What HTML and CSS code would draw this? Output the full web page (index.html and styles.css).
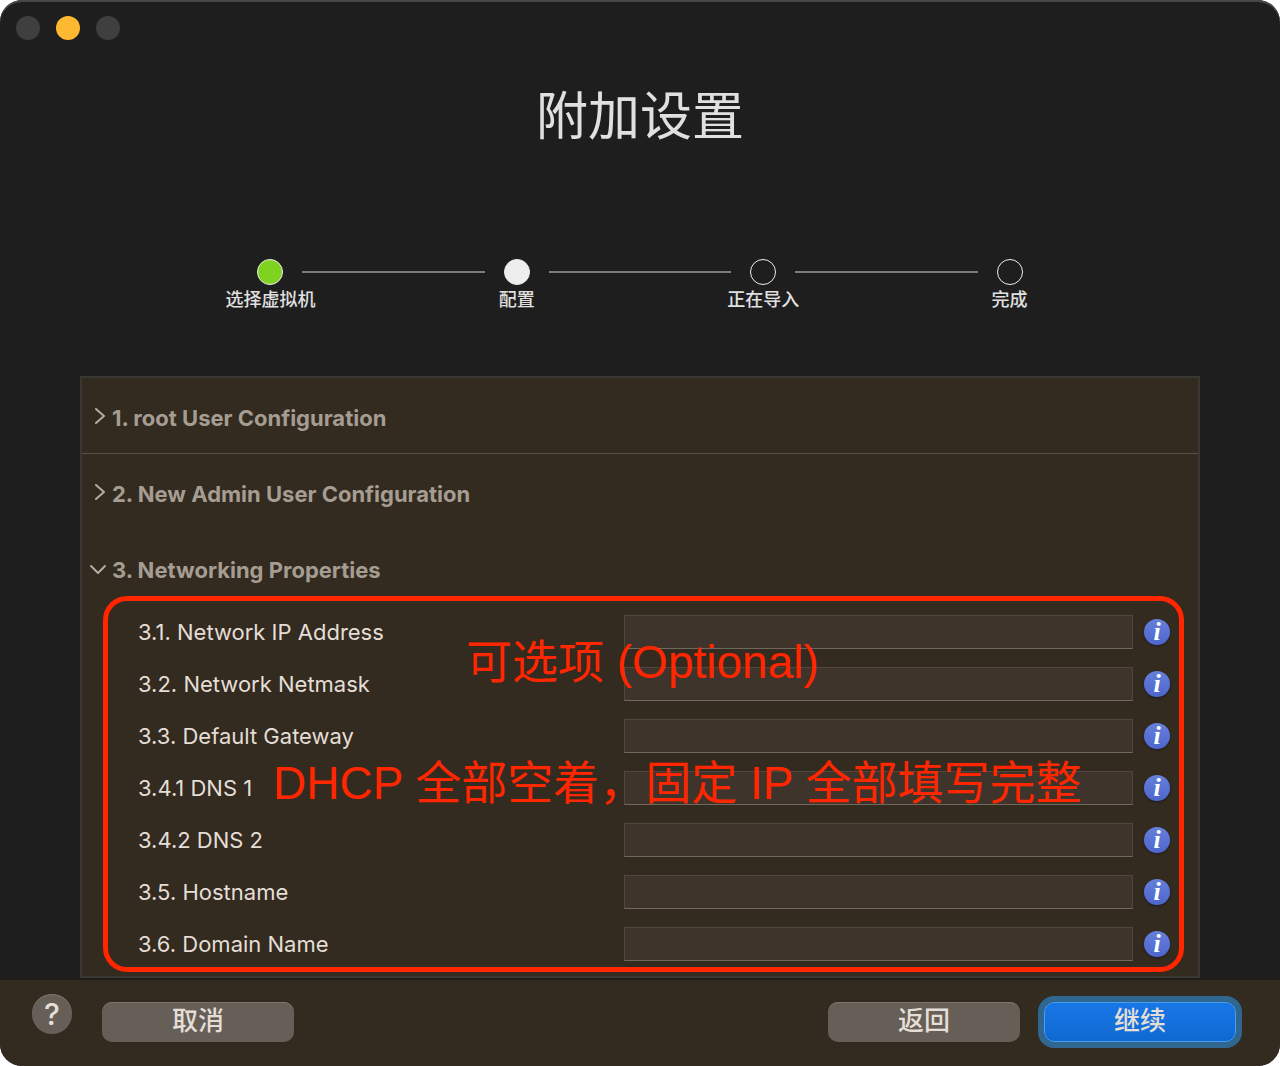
FILE: index.html
```html
<!DOCTYPE html>
<html lang="zh-CN">
<head>
<meta charset="utf-8">
<meta name="viewport" content="width=device-width, initial-scale=1">
<title>附加设置</title>
<link rel="stylesheet" href="styles.css">
</head>
<body>
<div class="window">
  <div class="titlebar">
    <button class="light" type="button" aria-label="关闭" disabled></button>
    <button class="light light-minimize" type="button" aria-label="最小化"></button>
    <button class="light" type="button" aria-label="缩放" disabled></button>
  </div>

  <h1 class="title">附加设置</h1>

  <ol class="steps">
    <li class="step">
      <div class="step-track"><span class="step-line step-line-none"></span><span class="step-dot step-dot-done"></span><span class="step-line"></span></div>
      <span class="step-label">选择虚拟机</span>
    </li>
    <li class="step" aria-current="step">
      <div class="step-track"><span class="step-line"></span><span class="step-dot step-dot-current"></span><span class="step-line"></span></div>
      <span class="step-label">配置</span>
    </li>
    <li class="step">
      <div class="step-track"><span class="step-line"></span><span class="step-dot"></span><span class="step-line"></span></div>
      <span class="step-label">正在导入</span>
    </li>
    <li class="step">
      <div class="step-track"><span class="step-line"></span><span class="step-dot"></span><span class="step-line step-line-none"></span></div>
      <span class="step-label">完成</span>
    </li>
  </ol>

  <main class="panel">
    <details class="section">
      <summary class="section-title section-ruled"><svg class="chevron" viewBox="0 0 20 20" aria-hidden="true"><path d="M8 1l8 7-8 7"/></svg>1. root User Configuration</summary>
    </details>
    <details class="section">
      <summary class="section-title"><svg class="chevron" viewBox="0 0 20 20" aria-hidden="true"><path d="M8 1l8 7-8 7"/></svg>2. New Admin User Configuration</summary>
    </details>
    <details class="section" open>
      <summary class="section-title"><svg class="chevron" viewBox="0 0 20 20" aria-hidden="true"><path d="M3 6l7 7 7-7"/></svg>3. Networking Properties</summary>
      <div class="fields">
        <div class="field"><label class="field-label" for="ip">3.1. Network IP Address</label><input class="field-input" id="ip" type="text"><button class="info" type="button">i</button></div>
        <div class="field"><label class="field-label" for="netmask">3.2. Network Netmask</label><input class="field-input" id="netmask" type="text"><button class="info" type="button">i</button></div>
        <div class="field"><label class="field-label" for="gateway">3.3. Default Gateway</label><input class="field-input" id="gateway" type="text"><button class="info" type="button">i</button></div>
        <div class="field"><label class="field-label" for="dns1">3.4.1 DNS 1</label><input class="field-input" id="dns1" type="text"><button class="info" type="button">i</button></div>
        <div class="field"><label class="field-label" for="dns2">3.4.2 DNS 2</label><input class="field-input" id="dns2" type="text"><button class="info" type="button">i</button></div>
        <div class="field"><label class="field-label" for="hostname">3.5. Hostname</label><input class="field-input" id="hostname" type="text"><button class="info" type="button">i</button></div>
        <div class="field"><label class="field-label" for="domain">3.6. Domain Name</label><input class="field-input" id="domain" type="text"><button class="info" type="button">i</button></div>
        <div class="callout">
          <p class="note note-optional">可选项 (Optional)</p>
          <p class="note note-dhcp">DHCP 全部空着，固定 IP 全部填写完整</p>
        </div>
      </div>
    </details>
  </main>

  <footer class="footer">
    <button class="help" type="button" aria-label="帮助"><span>?</span></button>
    <div class="actions">
      <button class="button" type="button">取消</button>
      <div class="actions-end">
        <button class="button" type="button">返回</button>
        <button class="button button-primary" type="button">继续</button>
      </div>
    </div>
  </footer>
</div>
</body>
</html>
```
FILE: styles.css
```css
* {
  box-sizing: border-box;
}

body {
  margin: 0;
  background: #fff;
  color: #e4ded6;
  font-family: Inter, "Noto Sans CJK SC", sans-serif;
}

button,
input {
  margin: 0;
  padding: 0;
  border: 0;
  color: inherit;
  font: inherit;
}

.window {
  display: flex;
  flex-direction: column;
  min-height: 100vh;
  overflow: hidden;
  border-radius: 22px;
  background: #1e1e1e;
  box-shadow: inset 0 2px #484848;
}

/* Title bar */
.titlebar {
  display: flex;
  gap: 16px;
  padding: 16px;
}

.light {
  width: 24px;
  height: 24px;
  border-radius: 50%;
  background: #3f3f3f;
}

.light-minimize {
  background: #feb933;
}

.title {
  margin: 21px 0 0;
  color: #e0e0e0;
  font-size: 52px;
  font-weight: 400;
  line-height: 80px;
  text-align: center;
}

/* Progress steps */
.steps {
  display: grid;
  grid-template-columns: repeat(4, 1fr);
  width: 77%;
  margin: 102px auto 0;
  padding: 0;
  list-style: none;
}

.step-track {
  display: flex;
  align-items: center;
}

.step-line {
  flex: 1;
  height: 2px;
  background: #7d7d7d;
}

.step-line-none {
  background: none;
}

.step-dot {
  width: 26px;
  height: 26px;
  margin: 0 19px;
  border: 1px solid #eee;
  border-radius: 50%;
}

.step-dot-done {
  background: #7ed321;
}

.step-dot-current {
  background: #eee;
}

.step-label {
  display: block;
  color: #e0e0e0;
  font-size: 18px;
  font-weight: 500;
  line-height: 30px;
  text-align: center;
}

/* Settings panel */
.panel {
  flex: 1;
  margin: 61px 80px 0;
  padding-bottom: 6px;
  border: 2px solid #383734;
  background: #332a20;
}

.section-title {
  display: flex;
  align-items: center;
  gap: 4px;
  height: 76px;
  padding: 4px 6px 0;
  color: #a69d92;
  font-size: 22px;
  font-weight: 700;
  list-style: none;
}

.section-ruled {
  border-bottom: 1px solid #5c5147;
}

.chevron {
  width: 20px;
  height: 20px;
  fill: none;
  stroke: #b5aca2;
  stroke-width: 2;
  stroke-linecap: round;
  stroke-linejoin: round;
}

.fields {
  position: relative;
  padding: 0 27px 0 56px;
}

.field {
  display: grid;
  grid-template-columns: 475fr 509fr 27px;
  column-gap: 11px;
  align-items: center;
  height: 52px;
}

.field-label {
  font-size: 22px;
  line-height: 28px;
}

.field-input {
  width: 100%;
  height: 34px;
  padding: 0 8px;
  border: 1px solid #50473d;
  border-bottom-color: #71685d;
  background: #3e342c;
  font-size: 22px;
}

.info {
  width: 26px;
  height: 26px;
  border-radius: 50%;
  background: linear-gradient(#6780dc, #4b65cc);
  box-shadow: 0 1px 2px #1c1a22;
  color: #fff;
  font-family: "Liberation Serif", serif;
  font-size: 26px;
  font-style: italic;
  font-weight: 700;
  line-height: 26px;
  text-align: center;
}

/* Red markup laid over the fields */
.callout {
  position: absolute;
  inset: -10px 14px -2px 21px;
  border: 5px solid #ff2600;
  border-radius: 24px;
  pointer-events: none;
}

.note {
  position: absolute;
  margin: 0;
  color: #ff2600;
  font-family: "Liberation Sans", "Noto Sans CJK SC", sans-serif;
  font-size: 46px;
  font-weight: 400;
  line-height: 64px;
  white-space: nowrap;
}

.note-optional {
  top: 29px;
  left: 358px;
}

.note-dhcp {
  top: 150px;
  left: 165px;
}

/* Bottom bar */
.footer {
  display: flex;
  gap: 30px;
  padding: 14px 44px 24px 32px;
  border-top: 2px solid #201d1a;
  background: #332a20;
}

.help {
  width: 40px;
  height: 40px;
  border-radius: 50%;
  background: #665f57;
  box-shadow: inset 0 1px #7c756c;
  font-size: 30px;
  font-weight: 500;
  line-height: 40px;
}

.actions {
  display: flex;
  flex: 1;
  justify-content: space-between;
  padding-top: 8px;
}

.actions-end {
  display: flex;
  gap: 24px;
}

.button {
  width: 192px;
  height: 40px;
  padding-bottom: 3px;
  border-radius: 10px;
  background: #665f57;
  box-shadow: inset 0 1px #7c756c;
  font-size: 26px;
  font-weight: 500;
  line-height: 36px;
}

.button-primary {
  border: 1px solid #479ef0;
  background: linear-gradient(#1877e6, #1069d2);
  box-shadow: 0 0 0 6px #2f6790;
}
```
